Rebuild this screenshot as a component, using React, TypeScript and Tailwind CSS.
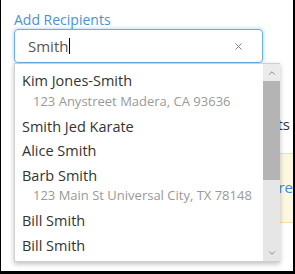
import { X, ChevronUp, ChevronDown } from "lucide-react";

const results = [
  { name: "Kim Jones-Smith", address: "123 Anystreet Madera, CA 93636" },
  { name: "Smith Jed Karate" },
  { name: "Alice Smith" },
  { name: "Barb Smith", address: "123 Main St Universal City, TX 78148" },
  { name: "Bill Smith" },
  { name: "Bill Smith" },
];

export default function App() {
  return (
    <div className="relative h-[274px] w-[295px] overflow-hidden border-b-[3px] border-l border-r-2 border-black bg-white font-['Open_Sans',sans-serif]">
      <div className="pl-[13px] pt-[10px]">
        <label className="block text-[14px] leading-[19px] text-[#4a8fdc]">Add Recipients</label>

        {/* Search input */}
        <div className="flex h-[34px] w-[249px] items-center rounded-[4px] border border-[#66afe9] pl-[13px] pr-[18px] shadow-[0_0_4px_rgba(102,175,233,0.6)]">
          <span className="text-[15px] text-[#555]">Smith</span>
          <span className="ml-px h-[16px] w-px bg-black" />
          <X className="ml-auto h-[11px] w-[11px] text-[#777]" strokeWidth={2} />
        </div>

        {/* Page content behind the menu */}
        <div className="mt-[50px] flex justify-end pr-[3px] text-[15px] text-[#333]">Recipients</div>
        <div className="mt-[17px] flex h-[70px] w-[300px] items-center justify-end border border-[#f1e3a8] bg-[#fcf7e1] pr-[20px] text-[15px] text-[#3b8be0]">
          Click here
        </div>
        <div className="mt-[52px] h-[20px] w-[271px] border border-[#d6d6d6]" />
      </div>

      {/* Autocomplete menu */}
      <div className="absolute left-[13px] top-[63px] flex h-[199px] w-[266px] border border-r-0 border-[#d0d0d0] bg-white shadow-[0_2px_5px_rgba(0,0,0,0.25)]">
        <ul className="flex-1 overflow-hidden pl-[7px] pt-[5px]">
          {results.map((r, i) => (
            <li key={i}>
              <div className="text-[14.5px] leading-[24.5px] text-[#333]">{r.name}</div>
              {r.address && (
                <div className="pb-[6px] pl-[11px] text-[13px] leading-[15px] text-[#999]">{r.address}</div>
              )}
            </li>
          ))}
        </ul>
        <div className="flex w-[17px] flex-col bg-[#e6e6e6]">
          <div className="flex h-[17px] items-center justify-center bg-[#ebebeb]">
            <ChevronUp className="h-[10px] w-[10px] text-[#777]" strokeWidth={2} />
          </div>
          <div className="h-[99px] bg-[#b4b4b4]" />
          <div className="flex-1" />
          <div className="flex h-[17px] items-center justify-center">
            <ChevronDown className="h-[10px] w-[10px] text-[#777]" strokeWidth={2} />
          </div>
        </div>
      </div>
    </div>
  );
}
